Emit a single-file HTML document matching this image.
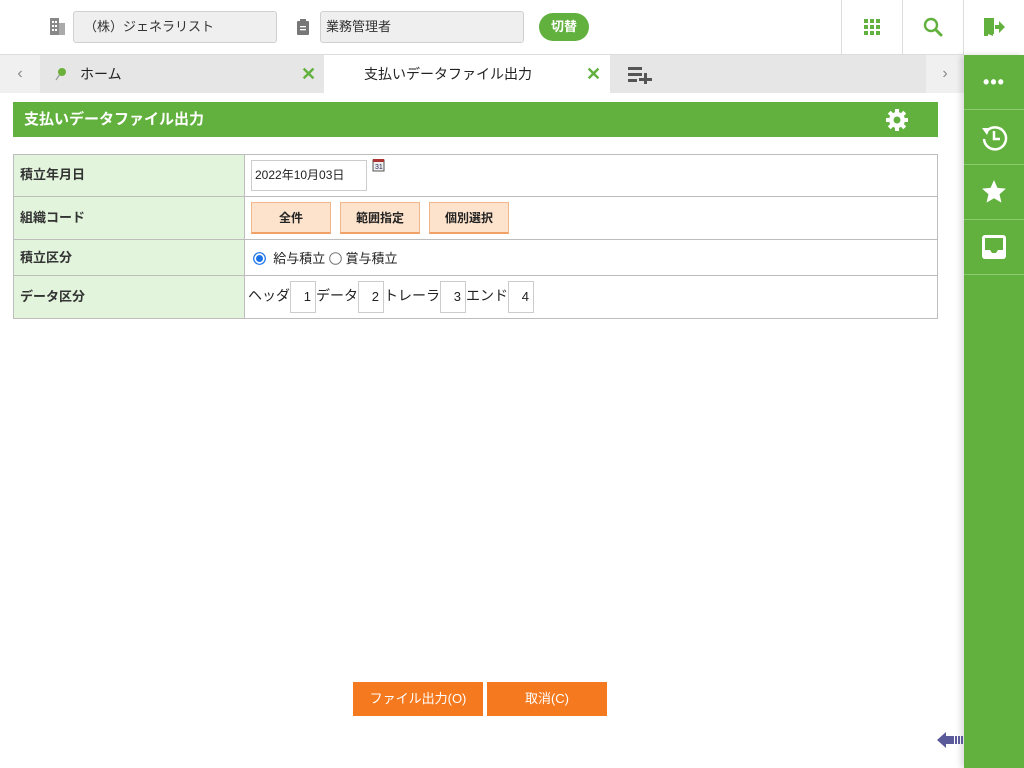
<!DOCTYPE html>
<html><head><meta charset="utf-8"><style>
*{box-sizing:border-box;margin:0;padding:0}
body{width:1024px;height:768px;overflow:hidden;background:#fff;font-family:"Liberation Sans","Noto Sans CJK JP",sans-serif;position:relative;font-size:13px;color:#222}
.abs{position:absolute}
.inp{position:absolute;background:#efefef;border:1px solid #d0d0d0;border-radius:3px;height:32px;top:11px;font-size:13px;line-height:30px;padding-left:10px;color:#333}
.vsep{position:absolute;top:0;width:1px;height:54px;background:#dcdcdc}
.side{position:absolute;left:964px;top:55px;width:60px;height:713px;background:#62b13e;box-shadow:-3px 0 6px rgba(0,0,0,.15)}
.side .it{height:55px;border-bottom:1px solid #8ccb70;display:flex;align-items:center;justify-content:center}
table{position:absolute;left:13px;top:154px;width:925px;border-collapse:collapse}
td{border:1px solid #bdbdbd;font-size:13px}
td.l{background:#e2f5dc;width:231px;padding-left:6px;font-weight:bold;color:#333;font-size:13px}
.ob{display:inline-block;background:#fde3cc;border:1px solid #f1b68a;border-bottom:2px solid #f1a068;height:32px;line-height:30px;text-align:center;font-weight:bold;font-size:12px;margin-right:9px}
.nb{display:inline-block;width:26px;height:32px;border:1px solid #ccc;text-align:right;padding-right:4px;line-height:30px;vertical-align:middle;font-size:13px}
.btn{position:absolute;top:682px;height:34px;background:#f57a1f;color:#fff;font-size:13px;line-height:34px;text-align:center}
</style></head><body>
<svg class="abs" style="left:50px;top:18px" width="15" height="17" viewBox="0 0 15 17"><rect x="0" y="0" width="9" height="17" fill="#888"/><rect x="9" y="5" width="6" height="12" fill="#aaa"/><g fill="#fff"><rect x="2" y="3" width="2" height="2"/><rect x="5" y="3" width="2" height="2"/><rect x="2" y="7" width="2" height="2"/><rect x="5" y="7" width="2" height="2"/><rect x="2" y="11" width="2" height="2"/><rect x="5" y="11" width="2" height="2"/></g></svg>
<div class="inp" style="left:73px;width:204px">（株）ジェネラリスト</div>
<svg class="abs" style="left:297px;top:19px" width="12" height="16" viewBox="0 0 12 16"><rect x="0" y="2" width="12" height="14" rx="1" fill="#777"/><rect x="3" y="0" width="6" height="4" fill="#777"/><g fill="#fff"><rect x="3" y="7" width="6" height="1.3"/><rect x="3" y="10" width="6" height="1.3"/></g></svg>
<div class="inp" style="left:320px;width:204px;padding-left:5px">業務管理者</div>
<div class="abs" style="left:539px;top:13px;width:50px;height:28px;border-radius:14px;background:#62b13e;color:#fff;font-weight:bold;font-size:13px;text-align:center;line-height:28px">切替</div>
<div class="vsep" style="left:841px"></div><div class="vsep" style="left:902px"></div><div class="vsep" style="left:963px"></div>
<svg class="abs" style="left:864px;top:19px" width="16" height="16"><g fill="#62b13e"><rect x="0" y="0" width="4" height="4"/><rect x="6" y="0" width="4" height="4"/><rect x="12" y="0" width="4" height="4"/><rect x="0" y="6" width="4" height="4"/><rect x="6" y="6" width="4" height="4"/><rect x="12" y="6" width="4" height="4"/><rect x="0" y="12" width="4" height="4"/><rect x="6" y="12" width="4" height="4"/><rect x="12" y="12" width="4" height="4"/></g></svg>
<svg class="abs" style="left:923px;top:17px" width="20" height="20" viewBox="0 0 20 20"><circle cx="8" cy="8" r="6" fill="none" stroke="#62b13e" stroke-width="2.4"/><path d="M12.5 12.5L18 18" stroke="#62b13e" stroke-width="3" stroke-linecap="round"/></svg>
<svg class="abs" style="left:983px;top:16px" width="22" height="22" viewBox="0 0 22 22"><rect x="1" y="2" width="10" height="4" fill="#62b13e"/><rect x="1" y="2" width="4" height="18" fill="#62b13e"/><path d="M5 4l5 2v14l-5-2z" fill="#62b13e"/><rect x="9" y="2" width="2" height="16" fill="#62b13e"/><path d="M12 9h4V5l6 6-6 6v-4h-4z" fill="#62b13e"/></svg>
<div class="abs" style="left:0;top:54px;width:964px;height:1px;background:#ddd"></div>
<div class="abs" style="left:0;top:55px;width:40px;height:38px;background:#f0f0f0;color:#888;font-size:16px;text-align:center;line-height:38px">‹</div>
<div class="abs" style="left:40px;top:55px;width:284px;height:38px;background:#e6e6e6"></div>
<svg class="abs" style="left:55px;top:67px" width="12" height="14"><path d="M1 13L5 7" stroke="#999" stroke-width="1.2"/><circle cx="7" cy="5" r="4" fill="#6bb03a"/></svg>
<div class="abs" style="left:80px;top:55px;line-height:38px;font-size:14px">ホーム</div>
<div class="abs" style="left:301px;top:55px;line-height:38px;font-size:18px;font-weight:bold;color:#62b13e">✕</div>
<div class="abs" style="left:364px;top:55px;line-height:38px;font-size:14px">支払いデータファイル出力</div>
<div class="abs" style="left:586px;top:55px;line-height:38px;font-size:18px;font-weight:bold;color:#62b13e">✕</div>
<div class="abs" style="left:610px;top:55px;width:316px;height:38px;background:#e6e6e6"></div>
<svg class="abs" style="left:628px;top:66px" width="25" height="18"><g fill="#555"><rect x="0" y="1" width="14" height="3"/><rect x="0" y="7" width="14" height="3"/><rect x="0" y="13" width="9" height="3"/><rect x="11" y="12" width="13" height="3"/><rect x="16" y="7" width="3" height="12"/></g></svg>
<div class="abs" style="left:926px;top:55px;width:38px;height:38px;background:#f0f0f0;color:#888;font-size:16px;text-align:center;line-height:38px">›</div>
<div class="side">
<div class="it"><span style="color:#fff;font-size:18px;font-weight:bold;letter-spacing:1px;line-height:10px">•••</span></div>
<div class="it"><svg width="28" height="28" viewBox="0 0 28 28"><path d="M6 9A11 11 0 1 1 4 16" fill="none" stroke="#fff" stroke-width="2.5"/><path d="M2 5l8 0-3 7z" fill="#fff"/><path d="M14 8v8h6" fill="none" stroke="#fff" stroke-width="2.5"/></svg></div>
<div class="it"><svg width="26" height="26" viewBox="0 0 24 24"><path d="M12 1l3.2 7.2 7.8.7-5.9 5.2 1.8 7.7L12 17.8 5.1 21.8l1.8-7.7L1 8.9l7.8-.7z" fill="#fff"/></svg></div>
<div class="it"><svg width="26" height="26" viewBox="0 0 26 26"><rect x="1" y="1" width="24" height="24" rx="3" fill="#fff"/><path d="M4 4h18v12h-5l-2 3h-4l-2-3H4z" fill="#62b13e"/></svg></div>
</div>
<div class="abs" style="left:13px;top:102px;width:925px;height:35px;background:#62b13e;color:#fff;font-weight:bold;font-size:15px;line-height:35px;padding-left:11px">支払いデータファイル出力</div>
<svg class="abs" style="left:885px;top:108px" width="24" height="24" viewBox="0 0 24 24"><g fill="#fff"><circle cx="12" cy="12" r="8"/><rect x="10" y="1" width="4" height="22"/><rect x="1" y="10" width="22" height="4"/><rect x="10" y="1" width="4" height="22" transform="rotate(45 12 12)"/><rect x="10" y="1" width="4" height="22" transform="rotate(-45 12 12)"/></g><circle cx="12" cy="12" r="3.5" fill="#62b13e"/></svg>
<table>
<tr style="height:42px"><td class="l" style="padding-bottom:4px">積立年月日</td><td style="padding-left:6px"><span style="display:inline-block;width:116px;height:31px;border:1px solid #ccc;line-height:29px;padding-left:3px;font-size:12px;vertical-align:middle">2022年10月03日</span><svg style="vertical-align:top;margin-left:5px;margin-top:-2px" width="14" height="14"><rect x="1" y="2" width="11" height="11" fill="#eee" stroke="#555"/><rect x="1" y="1" width="11" height="3" fill="#a33"/><text x="3" y="11" font-size="7" fill="#225" font-family="Liberation Sans">31</text></svg></td></tr>
<tr style="height:43px"><td class="l" style="padding-bottom:4px">組織コード</td><td style="padding-left:6px"><span class="ob" style="width:80px">全件</span><span class="ob" style="width:80px">範囲指定</span><span class="ob" style="width:80px">個別選択</span></td></tr>
<tr style="height:36px"><td class="l" style="padding-bottom:3px">積立区分</td><td style="padding-left:8px;font-size:13px"><svg width="13" height="13" style="vertical-align:-2px"><circle cx="6.5" cy="6.5" r="5.8" fill="#fff" stroke="#1a73e8" stroke-width="1.2"/><circle cx="6.5" cy="6.5" r="3.5" fill="#1a73e8"/></svg>&nbsp; 給与積立 <svg width="13" height="13" style="vertical-align:-2px"><circle cx="6.5" cy="6.5" r="5.8" fill="#fff" stroke="#777" stroke-width="1"/></svg> 賞与積立</td></tr>
<tr style="height:43px"><td class="l" style="padding-bottom:4px">データ区分</td><td style="padding-left:3px;font-size:14px">ヘッダ<span class="nb">1</span>データ<span class="nb">2</span>トレーラ<span class="nb">3</span>エンド<span class="nb">4</span></td></tr>
</table>
<div class="btn" style="left:353px;width:130px">ファイル出力(O)</div>
<div class="btn" style="left:487px;width:120px">取消(C)</div>
<svg class="abs" style="left:937px;top:730px" width="27" height="20" viewBox="0 0 27 20"><path d="M0 10L9 2v4h8v8H9v4z" fill="#5a5a9a"/><rect x="18" y="6" width="2" height="8" fill="#5a5a9a"/><rect x="21" y="6" width="2" height="8" fill="#5a5a9a"/><rect x="24" y="6" width="2" height="8" fill="#5a5a9a"/></svg>
</body></html>
